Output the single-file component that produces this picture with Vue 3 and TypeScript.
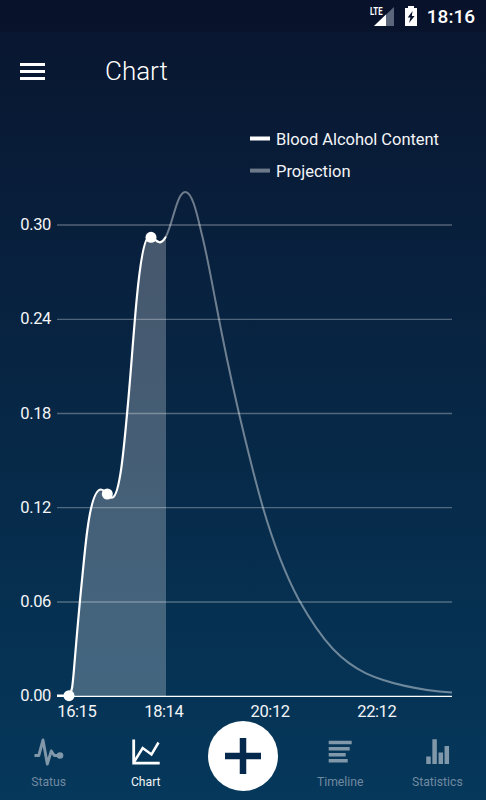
<script setup lang="ts">
interface Tick {
  label: string
  at: number
}

const yTicks: Tick[] = [
  { label: '0.30', at: 225 },
  { label: '0.24', at: 319.3 },
  { label: '0.18', at: 413.5 },
  { label: '0.12', at: 507.7 },
  { label: '0.06', at: 602 },
  { label: '0.00', at: 696.4 },
]

const xTicks: Tick[] = [
  { label: '16:15', at: 77 },
  { label: '18:14', at: 164 },
  { label: '20:12', at: 270.3 },
  { label: '22:12', at: 377 },
]

const drinks = [
  { x: 69, y: 695.7 },
  { x: 107.3, y: 494 },
  { x: 151, y: 237.3 },
]

const measured =
  'C72 692 72.5 687 74 669 C76.5 639 79 609 82 580 C84 560 85.5 543 87.5 529 C91 503 95.5 489.5 101 489.5 C104 489.5 105 491.5 107.3 494 C109.5 497 111 498 112.5 497.5 C120 495 124 448 128.3 400 C131.5 364 133.5 333 136.7 299 C140 264 144 238.5 149 236.5 C153.5 235 155 242.5 160 242.3 C163 242 164 239.5 166 236.5'
const projected =
  'M166 236.5 C173 223 177 192 185.3 192 C193 192 198 219 202 235 C207 255 211 278 215.3 300 C223 341 231 379 239 413.5 C247 447 254 477 263 507.7 C273 542 284 572 299 600 C311 621.5 320 635 333 649 C343 659.5 354 667.5 366 673.3 C386 682.5 418 690 452 692.6'
</script>

<template>
  <div class="screen">
    <header class="status-bar">
      <svg class="signal" width="26" height="24" viewBox="0 0 26 24">
        <path d="M25 2v19H5z" fill="#5b667b" />
        <path d="M17 9.6v11.4H5z" fill="#fff" />
        <text x="1" y="10.4" class="lte" textLength="12.5" lengthAdjust="spacingAndGlyphs">LTE</text>
      </svg>
      <svg class="battery" width="14" height="22" viewBox="0 0 14 22">
        <path d="M4 0h6v2h3v18H1V2h3z" fill="#fff" />
        <path d="M8.6 5 3.7 11.6H6.4L5.1 17 10.6 10H7.8z" fill="#09142c" />
      </svg>
      <span class="clock">18:16</span>
    </header>

    <div class="toolbar">
      <button class="menu" aria-label="Menu"><i></i><i></i><i></i></button>
      <h1>Chart</h1>
    </div>

    <main class="chart">
      <svg width="486" height="614" viewBox="0 108 486 614">
        <g class="label">
          <path d="M250 138.5h20" stroke="#fff" stroke-width="4" />
          <text x="276" y="144.8" textLength="163">Blood Alcohol Content</text>
          <path d="M250 170.6h20" stroke="#6d798b" stroke-width="4" />
          <text x="276" y="177" textLength="74.5">Projection</text>
        </g>
        <g v-for="t in yTicks" :key="t.label">
          <path :d="`M57 ${t.at}H452`" :class="t.label === '0.00' ? 'base' : 'grid'" />
          <text class="label" x="20.3" :y="t.at + 5" textLength="31">{{ t.label }}</text>
        </g>
        <text v-for="t in xTicks" :key="t.label" class="label" :x="t.at" y="716.8" text-anchor="middle" textLength="39.5">{{ t.label }}</text>
        <path :d="`M69 696 ${measured} V696Z`" fill="#fff" fill-opacity=".25" />
        <path :d="projected" class="projection" />
        <path :d="`M57 695.7H69 ${measured}`" class="measured" />
        <circle v-for="d in drinks" :key="d.x" :cx="d.x" :cy="d.y" r="5.5" fill="#fff" />
      </svg>
    </main>

    <nav class="tabs">
      <a class="tab">
        <svg width="32" height="30" viewBox="0 0 32 30">
          <path d="M1.5 18.5h4.3L10 3l4.3 24 4-13 3 4.5H27" fill="none" stroke="currentColor" stroke-width="2.9" stroke-linejoin="round" />
          <circle cx="27" cy="18.5" r="3.3" fill="currentColor" />
        </svg>
        <span>Status</span>
      </a>
      <a class="tab active">
        <svg width="32" height="30" viewBox="0 0 32 30">
          <path d="M3.7 2.5v23.6H29.7" fill="none" stroke="currentColor" stroke-width="2.8" />
          <path d="M4 25 12.7 11 21.5 17.5 28.5 5.5" fill="none" stroke="currentColor" stroke-width="2.5" />
        </svg>
        <span>Chart</span>
      </a>
      <button class="add" aria-label="Add">
        <svg width="36" height="36" viewBox="0 0 36 36">
          <path d="M18 0v36M0 18h36" stroke="#05294d" stroke-width="6.5" />
        </svg>
      </button>
      <a class="tab">
        <svg width="32" height="30" viewBox="0 0 32 30">
          <path d="M4.7 5.5h23M4.7 11.7h21M4.7 17.7h17M4.7 23.8h19" stroke="currentColor" stroke-width="3.6" />
        </svg>
        <span>Timeline</span>
      </a>
      <a class="tab">
        <svg width="32" height="30" viewBox="0 0 32 30">
          <path d="M7.5 27v-7.5M13.6 27V2.3M19.8 27V15.5M25.8 27V9" stroke="currentColor" stroke-width="4.5" />
        </svg>
        <span>Statistics</span>
      </a>
    </nav>
  </div>
</template>

<style>
body {
  margin: 0;
}
</style>

<style scoped>
.screen {
  width: 486px;
  height: 800px;
  overflow: hidden;
  display: flex;
  flex-direction: column;
  font-family: Roboto, "Liberation Sans", sans-serif;
  color: #fff;
  background: linear-gradient(#09152f, #05385b);
}
.status-bar {
  height: 32px;
  box-sizing: border-box;
  padding: 2px 11px 0 0;
  display: flex;
  justify-content: flex-end;
  align-items: center;
  background: rgba(5, 8, 25, 0.2);
}
.lte {
  font-size: 11.5px;
  font-weight: 700;
  fill: #fff;
}
.signal {
  margin-right: 9px;
}
.battery {
  margin-right: 9px;
}
.clock {
  font-size: 19px;
  font-weight: 500;
  line-height: 24px;
}
.toolbar {
  height: 76px;
  padding-left: 20px;
  display: flex;
  align-items: center;
  gap: 60px;
}
.menu {
  width: 25px;
  padding: 3px 0 0;
  border: 0;
  background: none;
  display: grid;
  gap: 4px;
}
.menu i {
  height: 3px;
  background: #fff;
}
h1 {
  margin: 2px 0 0;
  font-size: 26px;
  line-height: 32px;
  font-weight: 300;
}
.chart,
.chart svg {
  display: block;
}
.label {
  font-size: 16.5px;
  fill: #f3f5f7;
}
.grid {
  stroke: rgba(255, 255, 255, 0.3);
  stroke-width: 1.3;
}
.base {
  stroke: #fff;
  stroke-width: 1.2;
}
.projection {
  fill: none;
  stroke: rgba(255, 255, 255, 0.42);
  stroke-width: 2;
}
.measured {
  fill: none;
  stroke: #fff;
  stroke-width: 2.2;
}
.tabs {
  height: 78px;
  display: grid;
  grid-template-columns: repeat(5, 97.2px);
}
.tab {
  display: flex;
  flex-direction: column;
  align-items: center;
  padding-top: 15px;
  color: #8197aa;
}
.tab span {
  font-size: 12.2px;
  line-height: 18px;
  margin-top: 6px;
  color: #7189a0;
}
.tab.active {
  color: #fff;
}
.tab.active span {
  color: #f0f3f6;
}
.add {
  width: 70px;
  height: 70px;
  margin: -1px auto 0;
  padding: 0;
  border: 0;
  border-radius: 50%;
  background: #fff;
  display: grid;
  place-items: center;
}
</style>
